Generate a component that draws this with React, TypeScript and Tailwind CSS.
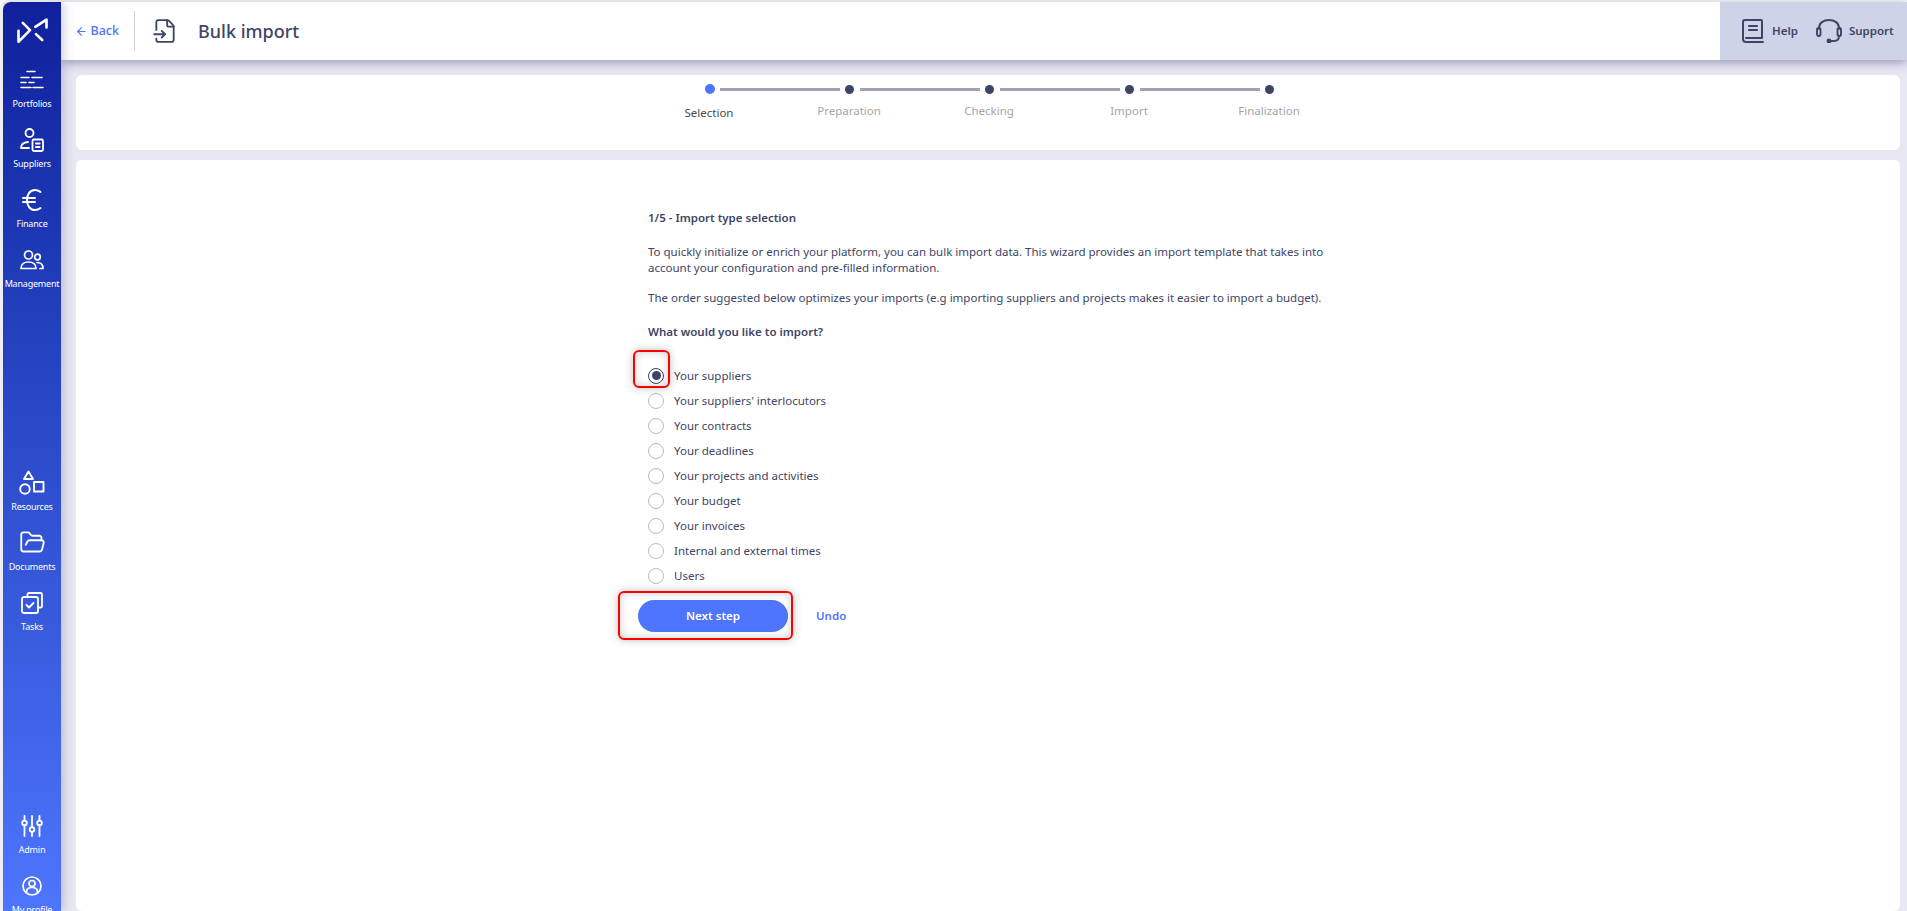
import { ArrowLeft, FileInput, FolderOpen } from 'lucide-react';
import type { ReactNode } from 'react';

const font = "font-['Noto_Sans',sans-serif]";

function LogoMark() {
  return (
    <svg className="shrink-0" width="35" height="28" viewBox="15 20 105 85" fill="none" stroke="white" strokeWidth="8" strokeLinecap="round" strokeLinejoin="round">
      <path d="M25 62v33L60 60 38 38" />
      <path d="M76 50l34-22v24" />
      <path d="M78 72l19 18" />
    </svg>
  );
}

function PortfoliosIcon() {
  return (
    <svg width="24" height="20" viewBox="0 0 24 20" fill="none" stroke="white" strokeWidth="1.6" strokeLinecap="round">
      <path d="M7 1.500h8M1 7.500h8M12 7.500h10M1 12.500h5M9 12.500h5M1 17.500h10M13 17.500h10" />
    </svg>
  );
}

function SuppliersIcon() {
  return (
    <svg width="24" height="24" viewBox="0 0 24 24" fill="none" stroke="white" strokeWidth="1.8" strokeLinecap="round" strokeLinejoin="round">
      <circle cx="9.500" cy="5" r="4" />
      <path d="M1 20c0-3 2-5.500 7-6M1 20h8" />
      <rect x="12.500" y="11.500" width="10.500" height="11.500" rx="1.500" />
      <path d="M16 15.500h3.500M16 19h3.500" strokeWidth="2.200" />
    </svg>
  );
}

function EuroIcon() {
  return (
    <svg width="20" height="22" viewBox="0 0 20 22" fill="none" stroke="white" strokeWidth="2" strokeLinecap="round">
      <path d="M18.500 3C16.500 1.500 15 1 13 1 8 1 5 5.500 5 11s3 10 8 10c2 0 3.500-.500 5.500-2" />
      <path d="M1 9h12M1 13h12" />
    </svg>
  );
}

function ManagementIcon() {
  return (
    <svg width="24" height="20" viewBox="0 0 24 20" fill="none" stroke="white" strokeWidth="1.700" strokeLinecap="round" strokeLinejoin="round">
      <circle cx="8.500" cy="5" r="4" />
      <circle cx="17.500" cy="7" r="2.800" />
      <path d="M1 18.500c0-4 3-6.500 7.500-6.500s7.500 2.500 7.500 6.500z" />
      <path d="M17 12.500c3.500 0 6 2 6 6h-3" />
    </svg>
  );
}

function ResourcesIcon() {
  return (
    <svg width="26" height="26" viewBox="0 0 26 26" fill="none" stroke="white" strokeWidth="1.900" strokeLinejoin="round">
      <path d="M9.500 1.500l4.500 7.500H5z" />
      <circle cx="6" cy="19" r="4.800" />
      <rect x="15" y="12" width="9.500" height="9.500" />
    </svg>
  );
}

function TasksIcon() {
  return (
    <svg width="22" height="22" viewBox="0 0 22 22" fill="none" stroke="white" strokeWidth="1.800" strokeLinecap="round" strokeLinejoin="round">
      <path d="M6.500 4.500V2.500a1.500 1.500 0 0 1 1.500-1.500h11.500A1.500 1.500 0 0 1 21 2.500V14a1.500 1.500 0 0 1-1.500 1.500h-2" />
      <rect x="1" y="5" width="16" height="16" rx="2" />
      <path d="M5.500 13l2.500 2.500 4.500-4.500" />
    </svg>
  );
}

function AdminIcon() {
  return (
    <svg width="22" height="22" viewBox="0 0 22 22" fill="none" stroke="white" strokeWidth="1.800" strokeLinecap="round">
      <path d="M3.500 1v4.500M3.500 10.500V21M11 1v11.500M11 17v4M18.500 1v4.500M18.500 10V21" />
      <circle cx="3.500" cy="8" r="2.300" />
      <circle cx="11" cy="14.500" r="2.300" />
      <circle cx="18.500" cy="8" r="2.300" />
    </svg>
  );
}

function ProfileIcon() {
  return (
    <svg width="20" height="20" viewBox="0 0 20 20" fill="none" stroke="white" strokeWidth="1.700" strokeLinecap="round">
      <circle cx="10" cy="10" r="9" />
      <circle cx="10" cy="7.500" r="3" />
      <path d="M4.500 16c0-3 2.500-4.500 5.500-4.500s5.500 1.500 5.500 4.500" />
    </svg>
  );
}

function BookIcon() {
  return (
    <svg width="22" height="24" viewBox="0 0 22 24" fill="none" stroke="#3d4566" strokeWidth="2" strokeLinecap="round" strokeLinejoin="round">
      <path d="M1 20V3a2 2 0 0 1 2-2h16a1 1 0 0 1 1 1v17H4" />
      <path d="M1 20c0 1.500 1 3 3 3h17" />
      <path d="M7 7h8M7 11h8" strokeWidth="2.200" />
    </svg>
  );
}

function HeadsetIcon() {
  return (
    <svg width="26" height="24" viewBox="0 0 26 24" fill="none" stroke="#3d4566" strokeWidth="1.900" strokeLinecap="round" strokeLinejoin="round">
      <path d="M3 10V9c0-5 4.500-8 10-8s10 3 10 8v1" />
      <rect x="1" y="9" width="3.500" height="8" rx="1.700" />
      <rect x="21.500" y="9" width="3.500" height="8" rx="1.700" />
      <path d="M23 17c0 3-2 5-5 5h-3" />
      <circle cx="13" cy="22" r="1.500" fill="#3d4566" />
    </svg>
  );
}

function NavItem({ icon, label }: { icon: ReactNode; label: string }) {
  return (
    <div className="flex h-[60px] shrink-0 flex-col items-center">
      <div className="flex h-[33px] items-center">{icon}</div>
      <span className="mt-[1px] text-[9px] leading-[14px] tracking-[-0.2px] whitespace-nowrap text-white">{label}</span>
    </div>
  );
}

const steps = ['Selection', 'Preparation', 'Checking', 'Import', 'Finalization'];

const imports = [
  'Your suppliers',
  "Your suppliers' interlocutors",
  'Your contracts',
  'Your deadlines',
  'Your projects and activities',
  'Your budget',
  'Your invoices',
  'Internal and external times',
  'Users',
];

export default function App() {
  return (
    <div className={`${font} h-[911px] w-[1907px] overflow-hidden bg-[#f6f6f8] pt-[2px] pl-[3px] text-[#3d4566]`}>
      <div className="flex h-full bg-[#e8e8f4]">
        {/* Sidebar */}
        <aside className="z-10 flex h-full w-[58px] shrink-0 flex-col items-center overflow-hidden rounded-tl-lg bg-gradient-to-b from-[#10209c] to-[#4e75fd] pt-[15px] shadow-[3px_0_10px_rgba(60,65,110,0.25)]">
          <LogoMark />
          <div className="mt-[18px] flex shrink-0 flex-col">
            <NavItem icon={<PortfoliosIcon />} label="Portfolios" />
            <NavItem icon={<SuppliersIcon />} label="Suppliers" />
            <NavItem icon={<EuroIcon />} label="Finance" />
            <NavItem icon={<ManagementIcon />} label="Management" />
          </div>
          <div className="mt-[163px] flex shrink-0 flex-col">
            <NavItem icon={<ResourcesIcon />} label="Resources" />
            <NavItem icon={<FolderOpen size={27} color="white" strokeWidth={1.6} />} label="Documents" />
            <NavItem icon={<TasksIcon />} label="Tasks" />
          </div>
          <div className="mt-[163px] flex shrink-0 flex-col">
            <NavItem icon={<AdminIcon />} label="Admin" />
            <NavItem icon={<ProfileIcon />} label="My profile" />
          </div>
        </aside>

        <div className="flex min-w-0 flex-1 flex-col">
          {/* Header */}
          <header className="z-[5] flex h-[58px] shrink-0 items-center bg-white shadow-[0_3px_10px_rgba(60,65,110,0.45)]">
            <div className="flex w-[73px] items-center justify-end gap-[3px] pr-[15px] text-[12.5px] font-medium text-[#4e75fd]">
              <ArrowLeft size={13} />
              <span>Back</span>
            </div>
            <div className="h-10 w-px bg-[#d0d0d8]" />
            <FileInput size={26} className="ml-[17px]" strokeWidth={1.7} />
            <h1 className="ml-[20px] text-[18px] font-medium">Bulk import</h1>
            <div className="ml-auto flex h-full w-[187px] items-center bg-[#cfd3e8] pl-[22px] text-[11.5px] font-semibold">
              <BookIcon />
              <span className="ml-[8px]">Help</span>
              <span className="ml-[18px]">
                <HeadsetIcon />
              </span>
              <span className="ml-[7px]">Support</span>
            </div>
          </header>

          {/* Stepper */}
          <section className="mt-[15px] ml-[15px] h-[75px] w-[1824px] shrink-0 rounded-md bg-white">
            <div className="ml-[564px] flex">
              {steps.map((step, i) => (
                <div key={step} className="relative flex w-[140px] flex-col items-center">
                  <div className="mt-[9px] flex h-[10px] w-full items-center">
                    <span className={`ml-[65px] shrink-0 rounded-full ${i === 0 ? 'h-[10px] w-[10px] bg-[#4e75fd]' : 'h-[9px] w-[9px] bg-[#3d4566]'}`} />
                    {i < 4 && <span className="absolute left-[80px] h-[3px] w-[120px] bg-[#9fa2b4]" />}
                  </div>
                  <span className={`mt-[8px] -translate-x-[1px] text-[11.5px] leading-[18px] ${i === 0 ? 'translate-y-[2px] text-[#4a4a4a]' : 'text-[#a5a5a5]'}`}>{step}</span>
                </div>
              ))}
            </div>
          </section>

          {/* Main card */}
          <main className="relative mt-[10px] ml-[15px] w-[1824px] flex-1 rounded-md bg-white pt-[49px] pl-[572px]">
            <h2 className="text-[11.5px] leading-[18px] font-semibold">1/5 - Import type selection</h2>
            <p className="mt-[17px] w-[700px] text-[11.5px] leading-[16px]">
              To quickly initialize or enrich your platform, you can bulk import data. This wizard provides an import template that takes into account your configuration and pre-filled information.
            </p>
            <p className="mt-[14px] text-[11.5px] leading-[16px]">
              The order suggested below optimizes your imports (e.g importing suppliers and projects makes it easier to import a budget).
            </p>
            <p className="mt-[17px] text-[11.5px] leading-[18px] font-semibold">What would you like to import?</p>
            <div className="mt-[22px] flex flex-col">
              {imports.map((item, i) => (
                <label key={item} className="flex h-[25px] items-center gap-[10px] text-[11.5px]">
                  <span className={`flex h-4 w-4 items-center justify-center rounded-full border ${i === 0 ? 'border-[#3d4566]' : 'border-[#b9b9c9]'}`}>
                    {i === 0 && <span className="h-[9px] w-[9px] rounded-full bg-[#3d4566]" />}
                  </span>
                  {item}
                </label>
              ))}
            </div>
            <div className="mt-[12px] -ml-[10px] flex items-center">
              <button className="h-8 w-[150px] rounded-full bg-[#4e75fd] text-[11.5px] font-semibold text-white">Next step</button>
              <span className="ml-[28px] text-[11.5px] font-semibold text-[#4e75fd]">Undo</span>
            </div>

            {/* Red annotation boxes */}
            <div className="absolute top-[190px] left-[557px] h-[38px] w-[37px] rounded-md border-2 border-[#f00] shadow-[0_0_8px_rgba(0,0,0,0.25),inset_0_0_8px_rgba(0,0,0,0.2)]" />
            <div className="absolute top-[431px] left-[542px] h-[49px] w-[175px] rounded-md border-2 border-[#f00] shadow-[0_0_8px_rgba(0,0,0,0.25),inset_0_0_8px_rgba(0,0,0,0.2)]" />
          </main>
        </div>
      </div>
    </div>
  );
}
